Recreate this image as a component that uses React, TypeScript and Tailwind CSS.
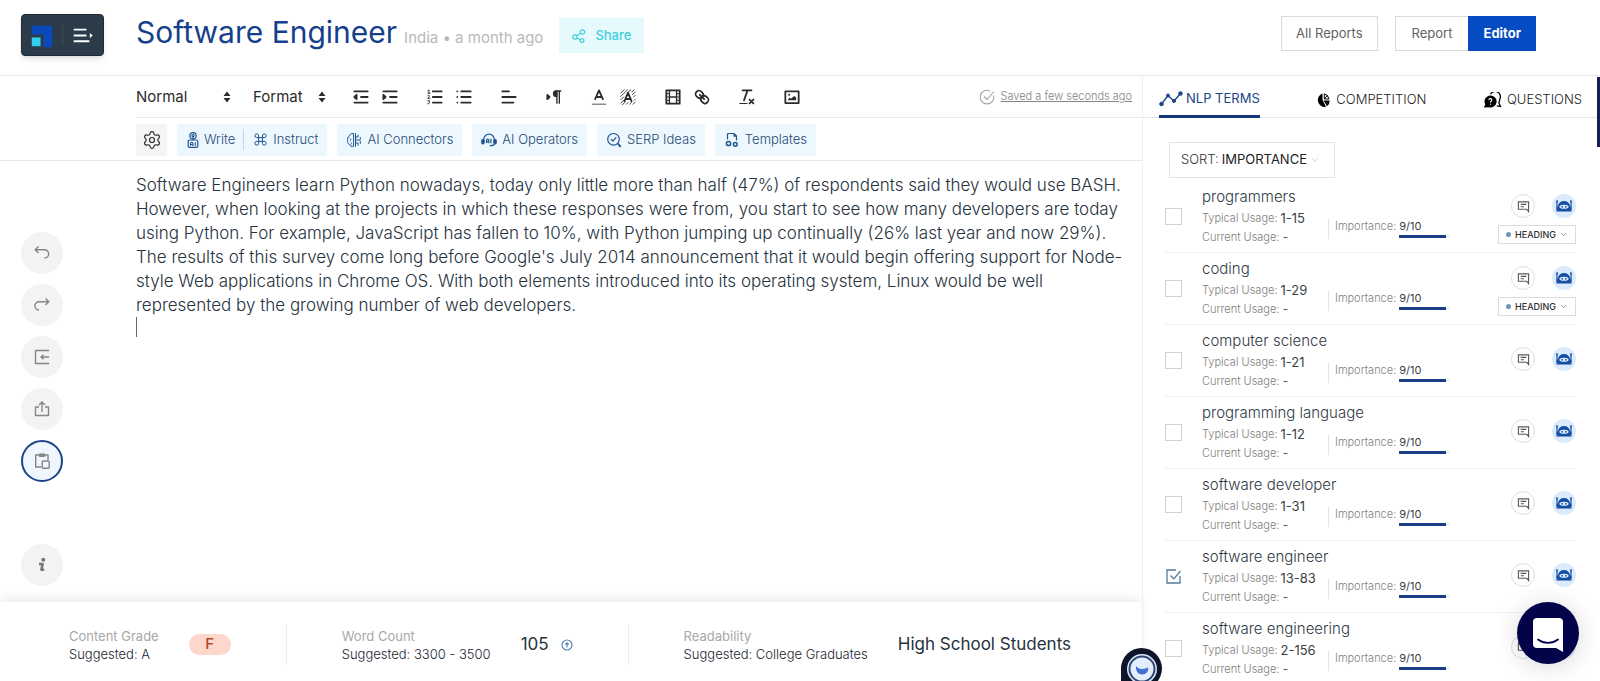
import { useState } from "react";
import type { ReactNode } from "react";
import { ChevronDown, Command, Settings } from "lucide-react";

type Term = { name: string; typical: string; heading?: boolean; checked?: boolean };

const TERMS: Term[] = [
  { name: "programmers", typical: "1-15", heading: true },
  { name: "coding", typical: "1-29", heading: true },
  { name: "computer science", typical: "1-21" },
  { name: "programming language", typical: "1-12" },
  { name: "software developer", typical: "1-31" },
  { name: "software engineer", typical: "13-83", checked: true },
  { name: "software engineering", typical: "2-156" },
];

/* ---------- toolbar drawings, on an 18 unit grid ---------- */

function Glyph({ children }: { children: ReactNode }) {
  return (
    <svg viewBox="0 0 18 18" className="size-5" fill="none" stroke="#2b2b2b" strokeWidth="1.6" strokeLinecap="round" strokeLinejoin="round" aria-hidden="true">
      {children}
    </svg>
  );
}

const outdent = <Glyph><path d="M3 14h12M3 4h12M9 9h6" /><path d="M5 7v4L3 9z" fill="#2b2b2b" /></Glyph>;
const indent = <Glyph><path d="M3 14h12M3 4h12M9 9h6" /><path d="M3 7v4l2-2z" fill="#2b2b2b" /></Glyph>;
const ordered = (
  <Glyph>
    <path d="M7 4h8M7 9h8M7 14h8" />
    <path d="M2.6 3.2l1-.6v3M2.5 5.6h2M2.5 7.8c.8-.7 1.8-.2 1.5.5L2.5 10.2h2M2.5 12.4h1.8l-1 1.1c1.4 0 1.3 1.8-.8 1.6" strokeWidth="0.8" />
  </Glyph>
);
const bullets = <Glyph><path d="M6.500 4H15M6.500 9H15M6.500 14H15M3 4h0M3 9h0M3 14h0" /></Glyph>;
const align = <Glyph><path d="M3 9h12M3 14h10M3 4h6" /></Glyph>;
const direction = (
  <Glyph>
    <path d="M3 11l2-2-2-2z" fill="#2b2b2b" />
    <g fill="#2b2b2b" stroke="none">
      <path d="M11 3a3 3 0 0 0 0 6h1V3z" />
      <path d="M11 3h4.500v1.300H11zM11 4h1.200v11H11zM13.200 4h1.200v11h-1.200z" />
    </g>
  </Glyph>
);
const color = <Glyph><path d="M3 15.500h12" stroke="#8a8a8a" strokeWidth="1.200" /><path d="M5.500 11L9 3l3.500 8M11.600 9H6.400" /></Glyph>;
const highlight = (
  <Glyph>
    <path d="M2.500 5.500l3-3M2.500 8.500l6-6M2.500 11.500L5 9M2.500 14.500l2.500-2.500M4 16l2-2M8.500 5.500l3-3M7.500 15.500l1.500-1.500M10.500 15.500l1.500-1.500M12.500 4.500l2-2M13 7l2.500-2.500M14 9l1.500-1.500M14.500 12l1-1M13.500 15.500l2-2" strokeWidth="0.9" stroke="#444" />
    <path d="M5.800 13L9 5l3.200 8M11.500 10.800H6.600" />
  </Glyph>
);
const film = (
  <Glyph>
    <rect x="3" y="3" width="12" height="12" />
    <path d="M5.800 3v12M12.200 3v12M5.800 9h6.400" strokeWidth="1.200" />
    <path d="M3 6h2.500M3 9h2.500M3 12h2.500M12.500 6H15M12.500 9H15M12.500 12H15" strokeWidth="0.9" />
  </Glyph>
);
const link = (
  <Glyph>
    <path d="M7 7l4 4" />
    <path d="M8.900 4.577a3.476 3.476 0 0 1 .36 4.679A3.476 3.476 0 0 1 4.577 8.900C3.185 7.500 2.035 6.400 4.217 4.217S7.500 3.185 8.900 4.577Z" />
    <path d="M13.423 9.100a3.476 3.476 0 0 0-4.679-.36 3.476 3.476 0 0 0 .36 4.679c1.392 1.392 2.500 2.542 4.679.36S14.815 10.500 13.423 9.100Z" />
  </Glyph>
);
const clean = <Glyph><path d="M5 3h8M6.300 12L9.500 3M11.300 11.300l3.500 3.500M14.800 11.300l-3.500 3.500" /><path d="M2.500 14.800h6.500" strokeWidth="1" /></Glyph>;
const image = (
  <Glyph>
    <rect x="3" y="4" width="12" height="10.500" />
    <circle cx="6.300" cy="7" r="0.600" fill="#2b2b2b" strokeWidth="0.600" />
    <path d="M5.500 12v-1L7 9.500l1 1L11 8l1.700 1.500V12z" fill="#2b2b2b" stroke="none" />
  </Glyph>
);

const TOOL_GROUPS: { label: string; icon: ReactNode }[][] = [
  [{ label: "Outdent", icon: outdent }, { label: "Indent", icon: indent }],
  [{ label: "Numbered list", icon: ordered }, { label: "Bulleted list", icon: bullets }],
  [{ label: "Align", icon: align }],
  [{ label: "Text direction", icon: direction }],
  [{ label: "Text color", icon: color }, { label: "Highlight", icon: highlight }],
  [{ label: "Insert video", icon: film }, { label: "Insert link", icon: link }],
  [{ label: "Clear formatting", icon: clean }],
  [{ label: "Insert image", icon: image }],
];

/* ---------- AI action drawings ---------- */

function Blue({ children }: { children: ReactNode }) {
  return (
    <svg viewBox="0 0 16 16" className="size-4 shrink-0" fill="none" stroke="#1f5590" strokeWidth="1.200" strokeLinecap="round" strokeLinejoin="round" aria-hidden="true">
      {children}
    </svg>
  );
}

const writeIcon = (
  <Blue>
    <circle cx="8" cy="3.800" r="3.200" />
    <circle cx="8" cy="3.600" r="1.100" />
    <path d="M8 4.800v3" />
    <rect x="3.200" y="8" width="9.600" height="7.400" rx="1.200" />
    <path d="M5.500 13.500v-2a1.200 1.200 0 0 1 2.400 0v2M5.500 12.500h2.400M10.300 10.500v3" strokeWidth="1.100" />
  </Blue>
);
const connectorIcon = (
  <Blue>
    <path d="M7.200 1.500C4.500 1 3.300 3 3.400 4.200 1.400 5 1 7 1.800 8.200 1 10 1.800 11.800 3.400 12.200c.3 1.800 2.200 2.700 3.800 2.200z" strokeWidth="1" />
    <path d="M3.800 6.500l1.400.8-1.200 1.800M5.400 10.800v1.500" strokeWidth="0.700" />
    <path d="M9.500 1.600v12.800M9.500 5h2.500V3M9.500 8h4.800M9.500 11h2.500v2.300M14.300 5.500v1.500M14.300 9.500v2" strokeWidth="1" />
  </Blue>
);
const operatorIcon = (
  <Blue>
    <path d="M2.700 9V7.500a5.300 5.300 0 0 1 10.600 0V9" />
    <rect x="0.800" y="7.500" width="2.300" height="4.300" rx="1" fill="#1f5590" />
    <rect x="12.900" y="7.500" width="2.300" height="4.300" rx="1" fill="#1f5590" />
    <path d="M5.600 10.700V8.200a1.100 1.100 0 0 1 2.200 0v2.500M5.600 9.600h2.200M9.900 7.200v3.500M13.300 12.200c-.5 1.200-2 1.500-4 1.500" />
  </Blue>
);
const serpIcon = <Blue><circle cx="7.500" cy="7.300" r="5.800" /><path d="M5.200 7.400l1.700 1.600 3-3.400" /><path d="M12 11.800l2.300 2.500" strokeWidth="1.800" /></Blue>;
const templateIcon = (
  <Blue>
    <path d="M3.500 7V2.500a1 1 0 0 1 1-1H10l2.500 2.400V8M10 1.500v2.600h2.500" />
    <circle cx="4.500" cy="11.500" r="2.100" strokeWidth="1.500" />
    <circle cx="11.300" cy="12.300" r="1.900" strokeWidth="1.500" />
  </Blue>
);

function Action({ icon, label, compact }: { icon: ReactNode; label: string; compact?: boolean }) {
  return (
    <button
      type="button"
      className={
        compact
          ? "flex h-8 items-center gap-[3px] bg-[#edf7fe] px-2 text-[13px] font-light text-[#1f4a75]"
          : "flex h-8 items-center gap-[5px] bg-[#edf7fe] px-[9px] text-[13px] font-light text-[#1f4a75]"
      }
    >
      {icon}
      <span>{label}</span>
    </button>
  );
}

function SortArrows() {
  return (
    <svg viewBox="0 0 8 12" className="pointer-events-none absolute right-0 top-1/2 h-3 w-2 -translate-y-1/2" fill="#2b2b2b" aria-hidden="true">
      <path d="M4 0.500L7.500 5h-7zM4 11.500L0.500 7h7z" />
    </svg>
  );
}

/* ---------- left rail ---------- */

function Rail({ label, active, children }: { label: string; active?: boolean; children: ReactNode }) {
  return (
    <button
      type="button"
      aria-label={label}
      className={
        active
          ? "flex size-[42px] items-center justify-center rounded-full border-2 border-[#1b4586] bg-[#eff6fd]"
          : "flex size-[42px] items-center justify-center rounded-full bg-[#f3f3f3]"
      }
    >
      <svg viewBox="0 0 16 16" className="size-4" fill="none" stroke="#858585" strokeWidth="1.400" strokeLinejoin="round" aria-hidden="true">
        {children}
      </svg>
    </button>
  );
}

/* ---------- terms panel ---------- */

function TermRow({ term }: { term: Term }) {
  const [checked, setChecked] = useState(Boolean(term.checked));
  const id = term.name.replace(/ /g, "-");
  return (
    <li className="flex h-[72px] shrink-0 border-b border-[#efefef]">
      <div className="relative ml-px flex w-[37px] items-center">
        <input
          id={id}
          type="checkbox"
          checked={checked}
          onChange={() => setChecked(!checked)}
          className="size-[17px] appearance-none border border-[#d2d2d2] bg-white checked:border-transparent"
        />
        {checked && (
          <svg viewBox="0 0 17 17" className="pointer-events-none absolute left-0 size-[17px]" fill="none" stroke="#56799f" strokeWidth="1.300" aria-hidden="true">
            <path d="M11 2H2v13h13V8M5.500 7.500l3.300 3.300L15.500 3" />
          </svg>
        )}
      </div>
      <div className="flex-1 pt-[6px]">
        <label htmlFor={id} className="block text-[15px] font-light leading-5 text-[#2f3a44]">{term.name}</label>
        <div className="flex">
          <div className="w-[126px] text-[11px] font-light text-[#808080]">
            <div className="flex h-[22px] items-center gap-[3px]">
              <span>Typical Usage:</span>
              <span className="pt-[2px] text-[13px] font-normal text-[#3a3f45]">{term.typical}</span>
            </div>
            <div className="flex h-4 items-center gap-[3px]">
              <span>Current Usage:</span>
              <span className="pt-[2px] text-[13px] text-[#3a3f45]">-</span>
            </div>
          </div>
          <div className="mt-3 flex h-5 gap-[3px] border-l border-[#e3e3e3] pl-[6px] text-[11px] leading-[14px]">
            <span className="font-light text-[#808080]">Importance:</span>
            <div>
              <div className="text-[#3a3f45]">9/10</div>
              <div className="mt-[2px] h-[3px] w-[51px] bg-[#e6f1fc]">
                <div className="h-full w-[92%] bg-[#1c3f88]" />
              </div>
            </div>
          </div>
        </div>
      </div>
      <div className="flex flex-col items-end justify-center gap-[7px] pb-[3px]">
        <div className={term.heading ? "mt-2 flex gap-[17px]" : "flex gap-[17px]"}>
          <button type="button" aria-label="Suggestions" className="flex size-6 items-center justify-center rounded-full border border-[#dedede] bg-white">
            <svg viewBox="0 0 14 14" className="size-[13px]" fill="none" stroke="#56585c" strokeWidth="1.200" aria-hidden="true">
              <path d="M1.500 2h11v10.500L10.500 10h-9zM4 4.700h6M4 7.200h3.500" />
            </svg>
          </button>
          <button type="button" aria-label="AI assistant" className="flex size-6 items-center justify-center rounded-full bg-[#dcebfb]">
            <svg viewBox="0 0 16 12" className="h-3 w-4" aria-hidden="true">
              <path d="M1 1v8M15 1v8" stroke="#174fa3" strokeWidth="1.200" />
              <circle cx="1" cy="1.300" r="1" fill="#174fa3" />
              <circle cx="15" cy="1.300" r="1" fill="#174fa3" />
              <path d="M0.500 11.500V7.500L2 6C2.500 2.800 5 1 8 1s5.500 1.800 6 5l1.500 1.500v4z" fill="#174fa3" />
              <ellipse cx="8" cy="6.700" rx="4.600" ry="2" fill="#dcebfb" />
              <circle cx="6.200" cy="6.800" r="0.900" fill="#174fa3" />
              <circle cx="9.800" cy="6.800" r="0.900" fill="#174fa3" />
            </svg>
          </button>
        </div>
        {term.heading && (
          <div className="relative flex h-[19px] items-center border border-[#dcdcdc] bg-white pl-[7px]">
            <span className="size-[5px] rounded-full bg-[#6f93bd]" />
            <select aria-label={`Placement of ${term.name}`} className="w-[64px] appearance-none bg-transparent pl-1 text-[9px] font-medium text-[#2d2d2d]">
              <option>HEADING</option>
              <option>BODY</option>
            </select>
            <ChevronDown className="pointer-events-none absolute right-[7px] size-[9px] text-[#777]" aria-hidden="true" />
          </div>
        )}
      </div>
    </li>
  );
}

function Metric({ title, suggested }: { title: string; suggested: string }) {
  return (
    <div className="text-[13px] leading-[18px]">
      <div className="text-[#a8a8a8]">{title}</div>
      <div className="font-light text-[#1b2530]">Suggested: {suggested}</div>
    </div>
  );
}

export default function App() {
  return (
    <div className="flex h-screen flex-col overflow-hidden bg-white font-['Inter',sans-serif] text-[#2b2b2b]">
      <header className="flex h-[76px] shrink-0 items-start justify-between border-b border-[#e6e6e6] pl-[21px] pr-16">
        <div className="flex items-start">
          <button type="button" aria-label="Menu" className="mt-[14px] flex h-[42px] w-[83px] items-center rounded border border-[#1c2a38] bg-[#2b3b4a] shadow-md">
            <svg viewBox="0 0 83 42" className="w-full" aria-hidden="true">
              <path d="M10 11h21v22h-9V20H10z" fill="#0a49bd" />
              <rect x="10" y="23" width="9" height="9" fill="#31d0ee" />
              <path d="M42 10v21" stroke="#3c4c5b" />
              <path d="M53 15h13M53 21h13M53 27h16" stroke="#fff" strokeWidth="2" />
              <path d="M69.500 18.500v5l3-2.500z" fill="#fff" />
            </svg>
          </button>
          <div className="ml-8 flex items-baseline gap-[7px] pt-[13px]">
            <h1 className="text-[30px] leading-[38px] text-[#163f8c]">Software Engineer</h1>
            <span className="text-[15px] text-[#b9b9b9]">India • a month ago</span>
          </div>
          <button type="button" className="ml-4 mt-[18px] flex h-[35px] items-center gap-[9px] bg-[#e6fafe] px-[13px] text-[13px] font-medium text-[#3ecfdb]">
            <svg viewBox="0 0 14 14" className="size-[14px]" fill="none" stroke="#3ecfdb" strokeWidth="1.200" aria-hidden="true">
              <circle cx="3" cy="8" r="2.200" />
              <circle cx="10.500" cy="3" r="2.200" />
              <circle cx="10" cy="11.500" r="1.900" />
              <path d="M4.800 6.800l3.900-2.600M5 9l3.200 1.700" />
            </svg>
            Share
          </button>
        </div>
        <div className="mt-4 flex gap-[17px] text-[13px] text-[#636363]">
          <button type="button" className="h-[35px] border border-[#dadada] px-[14px]">All Reports</button>
          <div className="flex">
            <button type="button" className="h-[35px] border border-r-0 border-[#dadada] px-4">Report</button>
            <button type="button" className="h-[35px] bg-[#044bc4] px-[15px] font-bold text-white">Editor</button>
          </div>
        </div>
      </header>

      <div className="flex min-h-0 flex-1">
        <main className="relative flex min-w-0 flex-1 flex-col">
          <div className="ml-[136px] flex h-[42px] shrink-0 items-center border-b border-[#e9e9e9]">
            <div className="relative w-[95px]">
              <select aria-label="Paragraph style" className="w-full appearance-none bg-transparent text-[15px]">
                <option>Normal</option>
                <option>Heading 1</option>
              </select>
              <SortArrows />
            </div>
            <div className="relative ml-[22px] w-[73px]">
              <select aria-label="Format" className="w-full appearance-none bg-transparent text-[15px]">
                <option>Format</option>
                <option>Code</option>
              </select>
              <SortArrows />
            </div>
            <div className="ml-[25px] flex gap-[25px]">
              {TOOL_GROUPS.map((group) => (
                <div key={group[0].label} className="flex gap-[9px]">
                  {group.map((tool) => (
                    <button key={tool.label} type="button" aria-label={tool.label}>{tool.icon}</button>
                  ))}
                </div>
              ))}
            </div>
            <div className="ml-auto mr-[10px] flex items-center gap-[6px] text-[11px] font-light text-[#858585]">
              <svg viewBox="0 0 16 16" className="size-4" fill="none" stroke="#a6a6a6" strokeWidth="1.100" aria-hidden="true">
                <path d="M14.600 6.500A6.800 6.800 0 1 1 11 2M5 7.500l3 3 7-8" />
              </svg>
              <a href="#history" className="underline">Saved a few seconds ago</a>
            </div>
          </div>

          <div className="flex h-[43px] shrink-0 items-center gap-[10px] border-b border-[#e9e9e9] pl-[136px] pt-px">
            <button type="button" aria-label="Settings" className="flex h-8 w-[31px] items-center justify-center bg-[#f5f5f5]">
              <Settings className="size-5" strokeWidth={1.400} />
            </button>
            <div className="flex items-center bg-[#edf7fe]">
              <Action compact icon={writeIcon} label="Write" />
              <span className="h-[21px] w-px bg-[#c3d6e8]" />
              <Action icon={<Command className="size-[15px] text-[#1f5590]" strokeWidth={1.600} />} label="Instruct" />
            </div>
            <Action icon={connectorIcon} label="AI Connectors" />
            <Action icon={operatorIcon} label="AI Operators" />
            <Action icon={serpIcon} label="SERP Ideas" />
            <Action icon={templateIcon} label="Templates" />
          </div>

          <div className="flex min-h-0 flex-1">
            <nav aria-label="Document actions" className="flex w-[136px] shrink-0 flex-col gap-[10px] pl-[21px] pt-[71px]">
              <Rail label="Undo"><path d="M4.500 1.500L1.200 4.700l3.300 3.200M1.200 4.700h9.300a4 4 0 0 1 0 8.300" /></Rail>
              <Rail label="Redo"><path d="M11.500 1.500l3.300 3.200-3.300 3.200M14.800 4.700H5a4 4 0 0 0 0 8.300" /></Rail>
              <Rail label="Import"><path d="M15 1.500H1.500v13H15M15 8H7.500M9.500 5.800L7 8l2.500 2.200" /></Rail>
              <Rail label="Export"><path d="M5 6H1.500v8.500h13V6H11M8 11V1.200M5 4l3-3 3 3" /></Rail>
              <Rail label="Paste" active>
                <path d="M7.500 14H1.700V2H14v5" />
                <path d="M5.500 1.200h5v2h-5z" fill="#858585" />
                <rect x="8.200" y="8" width="7" height="7.200" rx="1" />
              </Rail>
              <div className="pt-[52px]">
                <Rail label="Information">
                  <circle cx="9.300" cy="2.700" r="2" fill="#777" stroke="none" />
                  <path d="M5 7h3.600L7.400 12.800h2.800" stroke="#777" strokeWidth="2.600" />
                </Rail>
              </div>
            </nav>
            <div
              role="textbox"
              aria-label="Document"
              aria-multiline="true"
              contentEditable
              suppressContentEditableWarning
              className="flex-1 pr-3 pt-3 text-[17px] font-light leading-6 text-[#26323d] outline-none"
            >
              <p>
                Software Engineers learn Python nowadays, today only little more than half (47%) of respondents said they would use BASH.
                However, when looking at the projects in which these responses were from, you start to see how many developers are today
                using Python. For example, JavaScript has fallen to 10%, with Python jumping up continually (26% last year and now 29%).
                The results of this survey come long before Google's July 2014 announcement that it would begin offering support for
                Node-style Web applications in Chrome OS. With both elements introduced into its operating system, Linux would be well
                represented by the growing number of web developers.
              </p>
              <p className="flex h-5 items-center"><span className="h-5 w-px bg-[#666]" /></p>
            </div>
          </div>

          <footer className="relative flex h-[79px] shrink-0 items-center bg-white pl-[69px] pt-[6px] shadow-[0_-4px_10px_rgba(0,0,0,0.07)]">
            <Metric title="Content Grade" suggested="A" />
            <span className="ml-[30px] flex h-[21px] w-[42px] items-center justify-center rounded-full bg-[#fdd6cc] text-[15px] font-medium text-[#b5472a]">F</span>
            <span className="mx-[55px] h-10 w-px bg-[#ececec]" />
            <Metric title="Word Count" suggested="3300 - 3500" />
            <span className="ml-[30px] text-[17px] text-[#26323d]">105</span>
            <svg viewBox="0 0 12 12" className="ml-3 size-3" fill="none" stroke="#5b84b5" strokeWidth="1.200" aria-hidden="true">
              <circle cx="6" cy="6" r="5" />
              <path d="M6 8.500V4M4.300 5.500L6 3.800l1.700 1.700" />
            </svg>
            <span className="mx-[55px] h-10 w-px bg-[#ececec]" />
            <Metric title="Readability" suggested="College Graduates" />
            <span className="ml-[30px] text-[17px] text-[#26323d]">High School Students</span>
          </footer>

          <button type="button" aria-label="Assistant" className="absolute -bottom-2 -right-5 z-10 flex size-[41px] items-center justify-center rounded-full rounded-bl-lg bg-[#10142b]">
            <svg viewBox="0 0 32 32" className="size-8" aria-hidden="true">
              <circle cx="16" cy="16" r="15" fill="#dbe8fb" />
              <circle cx="16" cy="16" r="12.500" fill="#e2edfd" stroke="#2d4674" strokeWidth="2" />
              <path d="M10 13c2 2.500 5 4.500 12 1.500 1 4-2 7-6 7s-6.500-4-6-8.500z" fill="#4272cd" />
            </svg>
          </button>
        </main>

        <aside className="relative flex w-[458px] shrink-0 flex-col border-l border-[#f0f0f0]">
          <div role="tablist" className="flex h-[42px] shrink-0 items-stretch justify-between border-b border-[#e6e6e6] pl-4 pr-[18px] text-[13px] text-[#222]">
            <button type="button" role="tab" aria-selected="true" className="-mb-px flex items-center gap-[3px] border-b-3 border-[#12387c] pt-[6px] text-[#1c4587]">
              <svg viewBox="0 0 24 16" className="h-4 w-6" fill="#1c4587" stroke="#1c4587" aria-hidden="true">
                <path d="M2.500 13L9 4.500 15 10l6.500-7.500" fill="none" strokeWidth="1.400" />
                <circle cx="2.500" cy="13" r="1.800" />
                <circle cx="9" cy="4.500" r="1.500" />
                <circle cx="15" cy="10" r="1.500" />
                <circle cx="21.500" cy="2.500" r="1.800" />
              </svg>
              NLP TERMS
            </button>
            <button type="button" role="tab" aria-selected="false" className="flex items-center gap-[6px] pt-[6px] font-light">
              <svg viewBox="0 0 14 16" className="h-4 w-[14px]" aria-hidden="true">
                <path d="M6.500 1.500v6.200L10 15A7 7 0 0 1 6.500 1.500z" />
                <path d="M7.500 8.500h6.200A7 7 0 0 1 11 14.200z" />
                <path d="M8.300 7V1.800A6.800 6.800 0 0 1 13 7zM8.500 6.800l3-3.500" fill="none" stroke="#000" />
              </svg>
              COMPETITION
            </button>
            <button type="button" role="tab" aria-selected="false" className="flex items-center gap-[5px] pt-[6px] font-light">
              <svg viewBox="0 0 19 16" className="h-4 w-[19px]" aria-hidden="true">
                <path d="M7.300 3.500a6 6 0 1 1-1.500 11.700L0.800 15.500l1.500-3A6 6 0 0 1 7.300 3.500z" />
                <path d="M7.500 2.300A5.200 5.200 0 0 1 16.800 7c0 1.300-.3 2.500-1 3.500l1.700 4-3.700-.6" fill="none" stroke="#000" strokeWidth="1.300" />
                <path d="M5.800 8c.2-2 3.400-1.700 3 .2-.2.900-1.300.9-1.300 2.200M7.500 11.800v1" fill="none" stroke="#fff" strokeWidth="1.100" />
              </svg>
              QUESTIONS
            </button>
          </div>

          <div className="flex min-h-0 flex-1 flex-col overflow-hidden pl-[21px] pr-6 pt-6">
            <div className="relative ml-[5px] flex h-9 w-fit shrink-0 items-center border border-[#e2e2e2] pl-[11px] text-[13px]">
              <label htmlFor="sort" className="font-light text-[#333]">SORT:</label>
              <select id="sort" className="w-[115px] appearance-none bg-transparent pl-[3px] text-[#222]">
                <option>IMPORTANCE</option>
                <option>NAME</option>
              </select>
              <ChevronDown className="pointer-events-none absolute right-[14px] size-[10px] text-[#c8c8c8]" aria-hidden="true" />
            </div>
            <ul className="mt-[3px] flex flex-col">
              {TERMS.map((term) => <TermRow key={term.name} term={term} />)}
            </ul>
          </div>

          <span className="absolute right-0 top-px h-[70px] w-[3px] bg-[#12224f]" />
          <button type="button" aria-label="Open chat" className="absolute bottom-[17px] right-[21px] z-10 flex size-[62px] items-center justify-center rounded-full bg-[#03034a] shadow-[0_2px_24px_rgba(0,0,0,0.16)]">
            <svg viewBox="0 0 30 34" className="mt-1 h-[34px] w-[30px]" aria-hidden="true">
              <path d="M4 0h22a4 4 0 0 1 4 4v30l-7-4H4a4 4 0 0 1-4-4V4a4 4 0 0 1 4-4z" fill="#fff" />
              <path d="M5 21.500c6 4.500 14 4.500 20 0" fill="none" stroke="#03034a" strokeWidth="1.800" strokeLinecap="round" />
            </svg>
          </button>
        </aside>
      </div>
    </div>
  );
}
